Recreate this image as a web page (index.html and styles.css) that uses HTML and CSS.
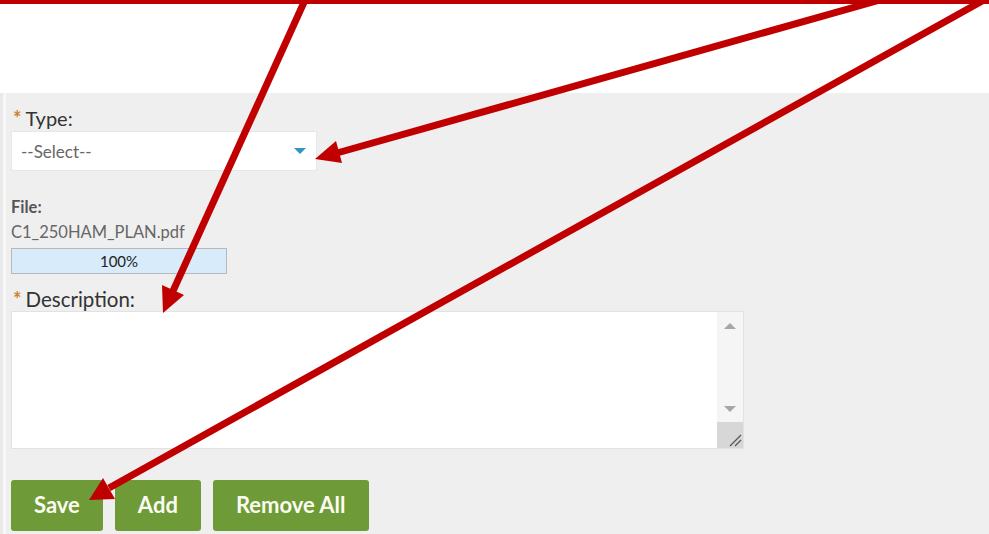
FILE: index.html
```html
<!DOCTYPE html>
<html lang="en">
<head>
<meta charset="utf-8">
<title>Attachment</title>
<link rel="stylesheet" href="styles.css">
</head>
<body>
<div class="callout-bar"></div>
<div class="page-gap"></div>

<section class="panel">
  <label class="field-label"><span class="req">*</span>Type:</label>
  <div class="select-box">
    <span class="select-text">--Select--</span>
    <span class="select-caret"></span>
  </div>

  <div class="file-label">File:</div>
  <div class="file-name">C1_250HAM_PLAN.pdf</div>
  <div class="progress"><span>100%</span></div>

  <label class="field-label desc-label"><span class="req">*</span>Description:</label>
  <div class="textarea-box">
    <textarea class="textarea-field"></textarea>
    <div class="scrollbar">
      <span class="sb-up"></span>
      <span class="sb-down"></span>
      <span class="sb-grip">
        <svg width="26" height="26" viewBox="0 0 26 26">
          <line x1="13" y1="24" x2="24" y2="13" stroke="#555" stroke-width="1.2"/>
          <line x1="18" y1="24" x2="24" y2="18" stroke="#555" stroke-width="1.2"/>
        </svg>
      </span>
    </div>
  </div>

  <div class="actions">
    <button class="btn">Save</button>
    <button class="btn">Add</button>
    <button class="btn">Remove All</button>
  </div>
</section>

<svg class="callouts" width="989" height="534" viewBox="0 0 989 534">
  <g stroke="#c00000" stroke-width="7" stroke-linecap="butt">
    <line x1="305" y1="0" x2="173" y2="291"/>
    <line x1="880" y1="0" x2="337" y2="153"/>
    <line x1="984" y1="0" x2="109" y2="488"/>
  </g>
  <g fill="#c00000">
    <polygon points="163,313 184,295 162,285"/>
    <polygon points="315,159 342,163 336,141"/>
    <polygon points="89,500 115,499 103,478"/>
  </g>
</svg>
</body>
</html>
```

FILE: styles.css
```css
* { box-sizing: border-box; }

body {
  margin: 0;
  position: relative;
  width: 989px;
  height: 534px;
  overflow: hidden;
  background: #ffffff;
  font-family: Lato, "Open Sans", sans-serif;
  color: #333333;
}

.callout-bar {
  height: 4px;
  background: #c00000;
}

.page-gap {
  height: 89px;
}

.panel {
  height: 441px;
  padding: 13px 0 0 11px;
  display: flex;
  flex-direction: column;
  align-items: flex-start;
  background: linear-gradient(to right, #e9e9e9 0 3px, #f7f7f7 3px 6px, #efefef 6px);
}

.field-label {
  display: block;
  height: 24px;
  font-size: 20px;
  line-height: 24px;
  color: #333333;
}

.desc-label {
  font-size: 20.5px;
}

.req {
  font-size: 20px;
  font-weight: 700;
  line-height: 0;
  color: #c8842f;
  margin: 0 4px 0 2px;
}

.select-box {
  margin-top: 1px;
  width: 306px;
  height: 40px;
  background: #ffffff;
  border: 1px solid #e7e7e7;
  display: flex;
  align-items: center;
  justify-content: space-between;
  padding: 0 10px 0 9px;
}

.select-text {
  font-size: 17px;
  color: #666666;
}

.select-caret {
  width: 0;
  height: 0;
  border-left: 6px solid transparent;
  border-right: 6px solid transparent;
  border-top: 6px solid #2e97c6;
}

.file-label {
  margin-top: 26px;
  font-size: 16.5px;
  line-height: 20px;
  font-weight: 700;
  color: #555555;
}

.file-name {
  margin-top: 5px;
  font-size: 16.5px;
  line-height: 20px;
  color: #666666;
}

.progress {
  margin-top: 6px;
  width: 216px;
  height: 26px;
  border: 1px solid #b9b9b9;
  background: #d8ebfa;
  display: flex;
  align-items: center;
  justify-content: center;
  font-size: 15px;
  color: #222222;
}

.desc-label {
  margin-top: 13px;
}

.textarea-box {
  width: 733px;
  height: 138px;
  display: flex;
  background: #ffffff;
  border: 1px solid #e2e2e2;
}

.textarea-field {
  flex: 1;
  border: 0;
  margin: 0;
  padding: 4px;
  resize: none;
  outline: none;
  background: #ffffff;
  font-family: inherit;
}

.scrollbar {
  width: 26px;
  display: flex;
  flex-direction: column;
  align-items: center;
  background: #f5f5f5;
}

.sb-up {
  margin-top: 11px;
  width: 0;
  height: 0;
  border-left: 6px solid transparent;
  border-right: 6px solid transparent;
  border-bottom: 6px solid #a6a6a6;
}

.sb-down {
  margin-top: 77px;
  width: 0;
  height: 0;
  border-left: 6px solid transparent;
  border-right: 6px solid transparent;
  border-top: 6px solid #a6a6a6;
}

.sb-grip {
  margin-top: auto;
  width: 26px;
  height: 26px;
  background: #d7d7d7;
  display: block;
}

.sb-grip svg { display: block; }

.actions {
  margin-top: 31px;
  display: flex;
  gap: 12px;
}

.btn {
  height: 51px;
  padding: 0 23px 3px;
  border: 0;
  border-radius: 3px;
  background: #6e9a37;
  color: #fbfbf0;
  font-family: inherit;
  font-size: 22px;
  font-weight: 700;
}

.callouts {
  position: absolute;
  left: 0;
  top: 0;
  pointer-events: none;
}
```
